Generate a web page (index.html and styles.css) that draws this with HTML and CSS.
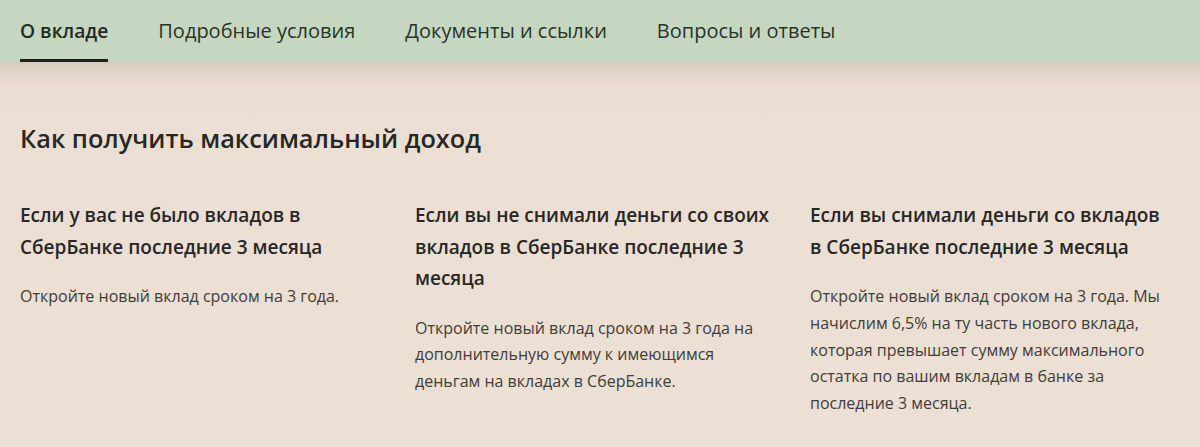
FILE: index.html
```html
<!DOCTYPE html>
<html lang="ru">
<head>
<meta charset="utf-8">
<link rel="stylesheet" href="styles.css">
</head>
<body>
<nav class="tabs">
  <a class="tab active">О вкладе</a>
  <a class="tab">Подробные условия</a>
  <a class="tab">Документы и ссылки</a>
  <a class="tab">Вопросы и ответы</a>
</nav>
<main class="content">
  <h1 class="title">Как получить максимальный доход</h1>
  <div class="cols">
    <section class="col">
      <h2 class="col-title">Если у вас не было вкладов в СберБанке последние 3 месяца</h2>
      <p class="col-text">Откройте новый вклад сроком на 3 года.</p>
    </section>
    <section class="col">
      <h2 class="col-title">Если вы не снимали деньги со своих вкладов в СберБанке последние 3 месяца</h2>
      <p class="col-text">Откройте новый вклад сроком на 3 года на дополнительную сумму к имеющимся деньгам на вкладах в СберБанке.</p>
    </section>
    <section class="col">
      <h2 class="col-title">Если вы снимали деньги со вкладов в СберБанке последние 3 месяца</h2>
      <p class="col-text">Откройте новый вклад сроком на 3 года. Мы начислим 6,5% на ту часть нового вклада, которая превышает сумму максимального остатка по вашим вкладам в банке за последние 3 месяца.</p>
    </section>
  </div>
</main>
</body>
</html>
```
FILE: styles.css
```css
* { box-sizing: border-box; }
html, body { margin: 0; height: 100%; }
body {
  background: #ecdfd3;
  font-family: "Open Sans", "Noto Sans", sans-serif;
  color: #262626;
  overflow: hidden;
}
.tabs {
  display: flex;
  gap: 50px;
  height: 62px;
  padding: 0 20px;
  background: #c5d7c0;
}
.tab {
  display: flex;
  align-items: center;
  font-size: 20px;
  color: #2a3328;
  border-bottom: 3px solid transparent;
  padding-top: 1px;
}
.tab.active {
  font-size: 19.2px;
  font-weight: 600;
  color: #232a22;
  border-bottom-color: #1e211d;
}
.content {
  padding: 0 20px;
  background: linear-gradient(to bottom, #d8c9bc 0px, #e2d4c8 12px, #ebded2 26px, #ecdfd3 100%);
  height: calc(100% - 62px);
}
.title {
  margin: 0;
  padding-top: 59px;
  font-size: 25.3px;
  line-height: 34px;
  font-weight: 600;
  color: #272727;
}
.cols {
  display: grid;
  grid-template-columns: 395px 395px 1fr;
  margin-top: 45px;
}
.col {
  max-width: 362px;
}
.col-title {
  margin: 0;
  font-size: 19px;
  line-height: 31.5px;
  font-weight: 600;
  color: #272727;
}
.col-text {
  margin: 20px 0 0;
  font-size: 16px;
  line-height: 26.8px;
  color: #403d3a;
}
```
